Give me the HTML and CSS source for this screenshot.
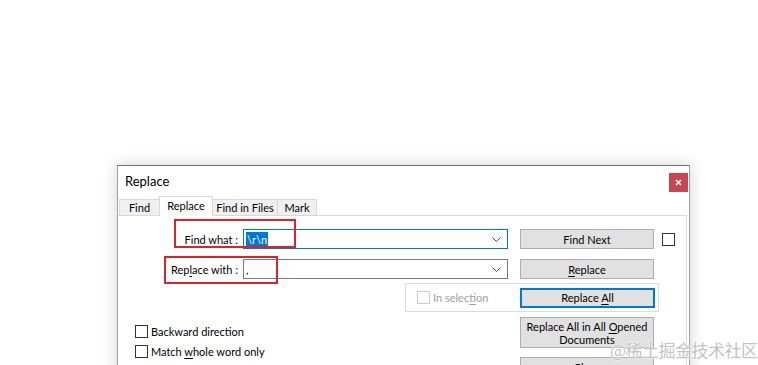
FILE: index.html
```html
<!DOCTYPE html>
<html lang="en">
<head>
  <meta charset="UTF-8">
  <title>Replace</title>
  <link rel="stylesheet" href="styles.css">
</head>
<body>
  <div class="dialog">
    <div class="titlebar">
      <span class="title">Replace</span>
      <button class="close-btn" aria-label="Close">
        <svg width="7" height="7" viewBox="0 0 7 7"><path d="M1 1L6 6M6 1L1 6" stroke="#fff" stroke-width="1.6"/></svg>
      </button>
    </div>

    <div class="tabs">
      <div class="tab">Find</div>
      <div class="tab active">Replace</div>
      <div class="tab">Find in Files</div>
      <div class="tab">Mark</div>
    </div>

    <div class="panel">
      <div class="row">
        <label class="field-label"><u>F</u>ind what :</label>
        <div class="combo focused">
          <span class="combo-text"><span class="selected">\r\n</span></span>
          <svg class="chevron" width="9" height="5" viewBox="0 0 9 5"><path d="M0.5 0.5L4.5 4.5L8.5 0.5" fill="none" stroke="#444"/></svg>
        </div>
        <button class="btn">Find Next</button>
        <span class="checkbox"></span>
      </div>

      <div class="row">
        <label class="field-label">Rep<u>l</u>ace with :</label>
        <div class="combo">
          <span class="combo-text">,</span>
          <svg class="chevron" width="9" height="5" viewBox="0 0 9 5"><path d="M0.5 0.5L4.5 4.5L8.5 0.5" fill="none" stroke="#444"/></svg>
        </div>
        <button class="btn"><u>R</u>eplace</button>
      </div>

      <div class="group">
        <label class="check disabled"><span class="checkbox"></span><span>In selec<u>t</u>ion</span></label>
        <button class="btn default">Replace <u>A</u>ll</button>
      </div>

      <div class="lower">
        <div class="options">
          <label class="check"><span class="checkbox"></span><span>Backward direction</span></label>
          <label class="check"><span class="checkbox"></span><span>Match <u>w</u>hole word only</span></label>
          <label class="check"><span class="checkbox"></span><span>Match <u>c</u>ase</span></label>
        </div>
        <div class="actions">
          <button class="btn tall">Replace All in All <u>O</u>pened<br>Documents</button>
          <button class="btn">Close</button>
        </div>
      </div>
    </div>

    <div class="mark mark-find"></div>
    <div class="mark mark-replace"></div>
  </div>

  <div class="watermark">@稀土掘金技术社区</div>
</body>
</html>
```

FILE: styles.css
```css
html, body {
  margin: 0;
  height: 100%;
  overflow: hidden;
  background-color: #ffffff;
}

body {
  position: relative;
  font-family: Lato, "Liberation Sans", sans-serif;
  font-size: 11px;
  color: #000000;
}

u {
  text-decoration-thickness: 1px;
  text-underline-offset: 2px;
}

.dialog {
  position: relative;
  margin: 165px 0 0 117px;
  width: 571px;
  height: 240px;
  background-color: #ffffff;
  border: 1px solid #a0a0a0;
  border-top-color: #6f6f6f;
  box-shadow: 0 0 14px rgba(0, 0, 0, 0.18);
}

.titlebar {
  height: 31px;
  display: flex;
  align-items: center;
  justify-content: space-between;
  padding-left: 7px;
}

.title {
  font-size: 13px;
  margin-top: -1px;
}

.close-btn {
  width: 19px;
  height: 19px;
  margin-right: 1px;
  align-self: flex-start;
  margin-top: 7px;
  padding: 0;
  border: none;
  background-color: #c9454f;
  display: flex;
  align-items: center;
  justify-content: center;
}

.tabs {
  display: flex;
  align-items: flex-end;
  height: 18px;
  padding-left: 1px;
}

.tab {
  height: 16px;
  line-height: 16px;
  text-align: center;
  white-space: nowrap;
  background-color: #f0f0f0;
  border: 1px solid #d9d9d9;
  border-bottom: none;
  margin-right: -1px;
  box-sizing: border-box;
}

.tab:first-child {
  width: 41px;
}

.tab.active {
  position: relative;
  z-index: 1;
  height: 20px;
  margin-bottom: -1px;
  width: 54px;
  line-height: 17px;
  background-color: #ffffff;
}

.tab:nth-child(3) {
  width: 66px;
}

.tab:nth-child(4) {
  width: 40px;
}

.panel {
  height: 200px;
  border-top: 1px solid #d9d9d9;
  border-right: 1px solid #d9d9d9;
  margin-right: 2px;
  padding-top: 13px;
}

.row {
  display: flex;
  align-items: center;
  height: 20px;
  margin-bottom: 10px;
}

.field-label {
  width: 120px;
  margin-right: 5px;
  text-align: right;
}

.combo {
  position: relative;
  width: 265px;
  height: 20px;
  box-sizing: border-box;
  border: 1px solid #7a7a7a;
  display: flex;
  align-items: center;
  margin-right: 12px;
}

.combo.focused {
  border-color: #0078d7;
}

.combo-text {
  padding-left: 2px;
  flex: 1;
}

.selected {
  background-color: #0078d7;
  color: #ffffff;
  padding: 1px 1px;
}

.chevron {
  margin-right: 6px;
}

.btn {
  font: inherit;
  width: 134px;
  height: 20px;
  padding: 0;
  background-color: #e1e1e1;
  border: 1px solid #adadad;
  color: #000000;
}

.btn.default {
  width: 135px;
  border: 2px solid #0078d7;
}

.btn.tall {
  height: 31px;
  line-height: 13px;
  white-space: nowrap;
}

.checkbox {
  display: inline-block;
  flex: none;
  width: 13px;
  height: 13px;
  box-sizing: border-box;
  border: 1px solid #333333;
  background-color: #ffffff;
}

.row .btn + .checkbox {
  margin-left: 8px;
}

.group {
  display: flex;
  align-items: center;
  margin: -6px 0 0 287px;
  width: 254px;
  height: 29px;
  box-sizing: border-box;
  border: 1px solid #dcdcdc;
  padding-left: 11px;
}

.check {
  display: flex;
  align-items: center;
  gap: 3px;
  height: 13px;
  white-space: nowrap;
}

.check.disabled {
  width: 103px;
  color: #a0a0a0;
}

.check.disabled .checkbox {
  border-color: #cccccc;
}

.lower {
  display: flex;
}

.options {
  display: flex;
  flex-direction: column;
  gap: 7px;
  width: 385px;
  padding: 13px 0 0 17px;
}

.actions {
  display: flex;
  flex-direction: column;
  gap: 9px;
  padding-top: 5px;
}

.mark {
  position: absolute;
  border: 2px solid #d9232d;
  box-sizing: border-box;
}

.mark-find {
  left: 56px;
  top: 53px;
  width: 122px;
  height: 29px;
}

.mark-replace {
  left: 46px;
  top: 90px;
  width: 114px;
  height: 28px;
}

.watermark {
  position: absolute;
  left: 610px;
  top: 337px;
  font-family: "Noto Sans CJK SC", sans-serif;
  font-size: 17px;
  color: #c4c4c4;
  text-shadow: 0 0 2px #ffffff, 0 0 2px #ffffff;
  letter-spacing: -0.5px;
}
```
